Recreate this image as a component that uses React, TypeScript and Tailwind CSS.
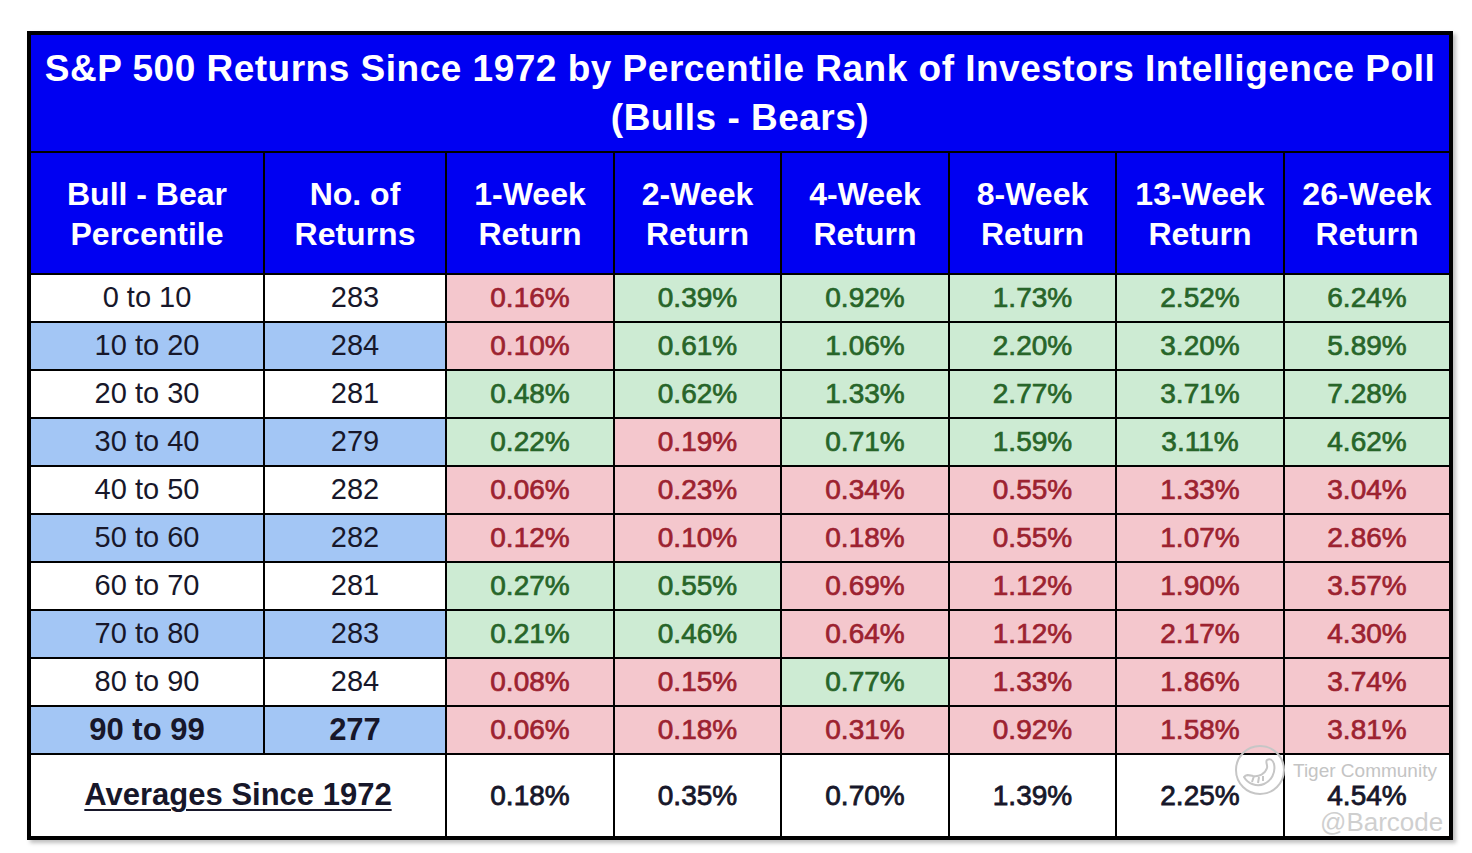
import React from "react";

type Cell = { v: string; up: boolean };

interface Row {
  range: string;
  count: string;
  cells: Cell[];
  bold?: boolean;
}

const g = (v: string): Cell => ({ v, up: true });
const p = (v: string): Cell => ({ v, up: false });

const rows: Row[] = [
  { range: "0 to 10", count: "283", cells: [p("0.16%"), g("0.39%"), g("0.92%"), g("1.73%"), g("2.52%"), g("6.24%")] },
  { range: "10 to 20", count: "284", cells: [p("0.10%"), g("0.61%"), g("1.06%"), g("2.20%"), g("3.20%"), g("5.89%")] },
  { range: "20 to 30", count: "281", cells: [g("0.48%"), g("0.62%"), g("1.33%"), g("2.77%"), g("3.71%"), g("7.28%")] },
  { range: "30 to 40", count: "279", cells: [g("0.22%"), p("0.19%"), g("0.71%"), g("1.59%"), g("3.11%"), g("4.62%")] },
  { range: "40 to 50", count: "282", cells: [p("0.06%"), p("0.23%"), p("0.34%"), p("0.55%"), p("1.33%"), p("3.04%")] },
  { range: "50 to 60", count: "282", cells: [p("0.12%"), p("0.10%"), p("0.18%"), p("0.55%"), p("1.07%"), p("2.86%")] },
  { range: "60 to 70", count: "281", cells: [g("0.27%"), g("0.55%"), p("0.69%"), p("1.12%"), p("1.90%"), p("3.57%")] },
  { range: "70 to 80", count: "283", cells: [g("0.21%"), g("0.46%"), p("0.64%"), p("1.12%"), p("2.17%"), p("4.30%")] },
  { range: "80 to 90", count: "284", cells: [p("0.08%"), p("0.15%"), g("0.77%"), p("1.33%"), p("1.86%"), p("3.74%")] },
  { range: "90 to 99", count: "277", cells: [p("0.06%"), p("0.18%"), p("0.31%"), p("0.92%"), p("1.58%"), p("3.81%")], bold: true },
];

const headers = [
  ["Bull - Bear", "Percentile"],
  ["No. of", "Returns"],
  ["1-Week", "Return"],
  ["2-Week", "Return"],
  ["4-Week", "Return"],
  ["8-Week", "Return"],
  ["13-Week", "Return"],
  ["26-Week", "Return"],
];

const averages = ["0.18%", "0.35%", "0.70%", "1.39%", "2.25%", "4.54%"];

// tiger community watermark, drawn roughly
const Watermark = () => (
  <div className="absolute left-[1233px] top-[743px] pointer-events-none">
    <svg width="54" height="54" viewBox="0 0 54 54" fill="none" stroke="#c6c6c6" strokeWidth="2">
      <circle cx="27" cy="27" r="24" />
      <path d="M11 34 C15 41 24 44 31 41 C38 38 43 30 41 21 C40 17 37 15 34 17 C32 19 35 22 34 25 C32 31 26 34 20 33 C16 32 13 31 11 34 Z" />
      <path d="M19 39 L21 33 M25 40 L26 34 M30 38 L30 33" />
    </svg>
  </div>
);

const App = () => {
  return (
    <div className="relative w-[1472px] h-[853px] bg-white font-['Liberation_Sans',Arial,sans-serif]">
      <div className="absolute left-[27px] top-[31px] shadow-[3px_3px_4px_rgba(0,0,0,0.25)]">
        <div className="border-4 border-black bg-black grid grid-cols-[232px_180px_166px_165px_166px_165px_166px_164px] gap-[2px]">
          <div className="col-span-8 h-[116px] bg-[#0000f2] flex flex-col items-center justify-center text-white font-bold text-[37px] leading-[49px] tracking-[0.5px]">
            <div>S&amp;P 500 Returns Since 1972 by Percentile Rank of Investors Intelligence Poll</div>
            <div>(Bulls - Bears)</div>
          </div>

          {headers.map((h) => (
            <div key={h[0]} className="h-[120px] bg-[#0000f2] flex flex-col items-center justify-center text-white font-bold text-[32px] leading-[40px] pt-[2px]">
              <div>{h[0]}</div>
              <div>{h[1]}</div>
            </div>
          ))}

          {rows.map((r, i) => {
            const side = i % 2 === 0 ? "bg-white" : "bg-[#a3c6f5]";
            const weight = r.bold ? "font-bold text-[31px]" : "text-[29px]";
            return (
              <React.Fragment key={r.range}>
                <div className={`h-[46px] ${side} ${weight} flex items-center justify-center text-[#17172a]`}>{r.range}</div>
                <div className={`h-[46px] ${side} ${weight} flex items-center justify-center text-[#17172a]`}>{r.count}</div>
                {r.cells.map((c, j) => (
                  <div
                    key={j}
                    className={`h-[46px] flex items-center justify-center text-[28px] [-webkit-text-stroke:0.7px_currentcolor] ${
                      c.up ? "bg-[#cdebd3] text-[#276529]" : "bg-[#f4c7cd] text-[#9c2230]"
                    }`}
                  >
                    {c.v}
                  </div>
                ))}
              </React.Fragment>
            );
          })}

          <div className="col-span-2 h-[81px] bg-white flex items-center justify-center">
            <span className="font-bold text-[31px] underline underline-offset-[4px] decoration-[2px] text-[#17172a]">Averages Since 1972</span>
          </div>
          {averages.map((a) => (
            <div key={a} className="h-[81px] bg-white flex items-center justify-center text-[28px] text-[#17172a] [-webkit-text-stroke:0.8px_currentcolor]">
              {a}
            </div>
          ))}
        </div>
      </div>

      <Watermark />
      <div className="absolute left-[1293px] top-[761px] text-[19px] leading-[20px] text-[#c4c4c4] pointer-events-none">
        Tiger Community
      </div>
      <div className="absolute left-[1320px] top-[808px] text-[26px] leading-[28px] text-[#cfcfcf] pointer-events-none">
        @Barcode
      </div>
    </div>
  );
};

export default App;
